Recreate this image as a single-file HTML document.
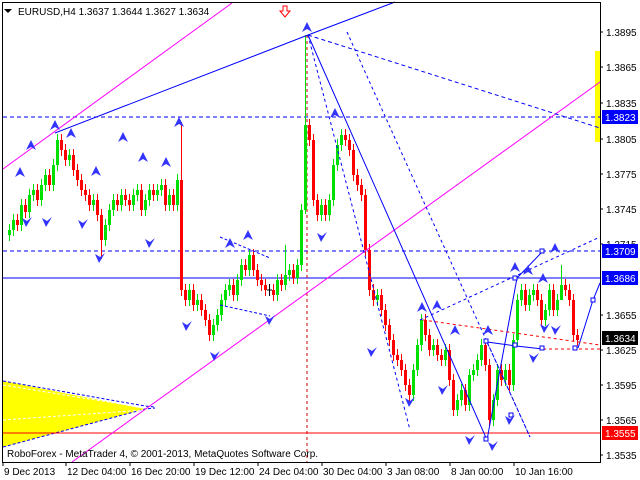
<!DOCTYPE html>
<html><head><meta charset="utf-8"><style>
html,body{margin:0;padding:0;background:#fff;}
svg{display:block;font-family:"Liberation Sans",sans-serif;}
</style></head><body>
<svg width="640" height="480" viewBox="0 0 640 480" xmlns="http://www.w3.org/2000/svg" xmlns:xlink="http://www.w3.org/1999/xlink">
<defs>
<path id="u" d="M-5 5L0-5L5 5L0 2Z" fill="#33f"/>
<path id="d" d="M-5-4L0-1L5-5L-1 5Z" fill="#33f"/>
</defs>
<rect width="640" height="480" fill="#fff"/>
<polygon points="3,381 3,447 145,409" fill="#ffff00"/>
<polyline points="3,381 145,406 155,407" fill="none" stroke="#00f" stroke-dasharray="3,2"/>
<polyline points="3,447 145,409 155,408" fill="none" stroke="#00f" stroke-dasharray="3,2"/>
<line x1="3" y1="385" x2="145" y2="408" stroke="#fff" stroke-dasharray="3,2"/>
<line x1="3" y1="420" x2="145" y2="410" stroke="#fff" stroke-dasharray="3,2"/>
<rect x="595" y="51" width="6" height="91" fill="#ffff00"/>

<g fill="none" stroke-width="1">
<line x1="3" y1="117" x2="600" y2="117" stroke="#00f" stroke-dasharray="4,3"/>
<line x1="3" y1="251" x2="600" y2="251" stroke="#00f" stroke-dasharray="4,3"/>
<line x1="3" y1="278" x2="600" y2="278" stroke="#00f"/>
<line x1="3" y1="433" x2="600" y2="433" stroke="#f00"/>
<line x1="307" y1="35" x2="307" y2="462" stroke="#c00" stroke-dasharray="3,3"/>
</g>

<!-- candles wicks -->
<path stroke="#00e000" fill="none" d="M9.5 224v17M13.5 214v22M21.5 199v32M29.5 189v29M33.5 184v17M41.5 179v27M45.5 169v22M53.5 159v32M57.5 134v37M69.5 149v17M93.5 194v17M105.5 219v27M109.5 204v27M113.5 194v22M121.5 189v22M133.5 189v22M137.5 184v17M145.5 194v22M149.5 184v22M157.5 184v17M161.5 179v17M169.5 189v22M177.5 174v37M189.5 284v22M197.5 294v17M213.5 319v22M217.5 309v22M221.5 294v27M225.5 284v22M229.5 279v17M237.5 274v27M241.5 259v27M249.5 249v27M277.5 274v27M285.5 245v45M289.5 264v17M297.5 259v25M301.5 204v67M305.5 35v179M321.5 199v22M329.5 194v27M333.5 159v47M337.5 139v32M341.5 129v22M377.5 289v17M413.5 364v37M417.5 339v37M421.5 314v37M433.5 339v17M445.5 344v22M457.5 394v22M461.5 384v22M469.5 369v42M473.5 364v17M477.5 354v22M481.5 339v27M493.5 394v32M497.5 364v42M505.5 364v22M513.5 334v57M517.5 294v52M521.5 284v22M529.5 289v22M533.5 284v17M545.5 304v22M549.5 284v32M557.5 294v22M561.5 265v35"/>
<path stroke="#f00" fill="none" d="M17.5 214v17M25.5 199v19M37.5 184v22M49.5 169v22M61.5 134v22M65.5 144v22M73.5 149v27M77.5 164v22M81.5 174v22M85.5 184v17M89.5 189v22M97.5 194v27M101.5 209v50M117.5 194v17M125.5 189v17M129.5 194v17M141.5 184v32M153.5 184v17M165.5 179v32M173.5 189v22M181.5 122v174M185.5 284v22M193.5 284v27M201.5 294v22M205.5 304v22M209.5 314v27M233.5 279v22M245.5 259v17M253.5 249v27M257.5 264v22M261.5 274v17M265.5 279v17M273.5 284v17M281.5 274v17M293.5 264v20M309.5 119v27M313.5 134v72M317.5 194v27M325.5 199v22M345.5 129v17M349.5 134v22M353.5 144v37M357.5 169v22M361.5 179v22M365.5 189v67M369.5 244v52M373.5 284v22M381.5 289v27M385.5 304v27M389.5 319v27M393.5 334v27M397.5 349v17M401.5 354v22M405.5 364v27M409.5 379v22M425.5 314v27M429.5 329v27M437.5 339v22M441.5 349v17M449.5 344v42M453.5 374v42M465.5 384v27M485.5 339v32M489.5 359v67M501.5 364v22M509.5 364v27M525.5 284v27M537.5 284v22M541.5 294v32M553.5 284v32M565.5 279v17M569.5 284v22M573.5 294v47M577.5 329v17"/>
<path stroke="#000" fill="none" d="M269.5 284v12M267 290h5"/>
<path fill="#00e000" d="M8 230h3v5h-3zM12 220h3v10h-3zM20 205h3v20h-3zM28 195h3v17h-3zM32 190h3v5h-3zM40 185h3v15h-3zM44 175h3v10h-3zM52 165h3v20h-3zM56 140h3v25h-3zM68 155h3v5h-3zM92 200h3v5h-3zM104 225h3v15h-3zM108 210h3v15h-3zM112 200h3v10h-3zM120 195h3v10h-3zM132 195h3v10h-3zM136 190h3v5h-3zM144 200h3v10h-3zM148 190h3v10h-3zM156 190h3v5h-3zM160 185h3v5h-3zM168 195h3v10h-3zM176 180h3v25h-3zM188 290h3v10h-3zM196 300h3v5h-3zM212 325h3v10h-3zM216 315h3v10h-3zM220 300h3v15h-3zM224 290h3v10h-3zM228 285h3v5h-3zM236 280h3v15h-3zM240 265h3v15h-3zM248 255h3v15h-3zM276 280h3v15h-3zM284 275h3v10h-3zM288 270h3v5h-3zM296 265h3v13h-3zM300 210h3v55h-3zM304 125h3v85h-3zM320 205h3v10h-3zM328 200h3v15h-3zM332 165h3v35h-3zM336 145h3v20h-3zM340 135h3v10h-3zM376 295h3v5h-3zM412 370h3v25h-3zM416 345h3v25h-3zM420 320h3v25h-3zM432 345h3v5h-3zM444 350h3v10h-3zM456 400h3v10h-3zM460 390h3v10h-3zM468 375h3v30h-3zM472 370h3v5h-3zM476 360h3v10h-3zM480 345h3v15h-3zM492 400h3v20h-3zM496 370h3v30h-3zM504 370h3v10h-3zM512 340h3v45h-3zM516 300h3v40h-3zM520 290h3v10h-3zM528 295h3v10h-3zM532 290h3v5h-3zM544 310h3v10h-3zM548 290h3v20h-3zM556 300h3v10h-3zM560 285h3v15h-3z"/>
<path fill="#f00" d="M16 220h3v5h-3zM24 205h3v7h-3zM36 190h3v10h-3zM48 175h3v10h-3zM60 140h3v10h-3zM64 150h3v10h-3zM72 155h3v15h-3zM76 170h3v10h-3zM80 180h3v10h-3zM84 190h3v5h-3zM88 195h3v10h-3zM96 200h3v15h-3zM100 215h3v25h-3zM116 200h3v5h-3zM124 195h3v5h-3zM128 200h3v5h-3zM140 190h3v20h-3zM152 190h3v5h-3zM164 185h3v20h-3zM172 195h3v10h-3zM180 180h3v110h-3zM184 290h3v10h-3zM192 290h3v15h-3zM200 300h3v10h-3zM204 310h3v10h-3zM208 320h3v15h-3zM232 285h3v10h-3zM244 265h3v5h-3zM252 255h3v15h-3zM256 270h3v10h-3zM260 280h3v5h-3zM264 285h3v5h-3zM272 290h3v5h-3zM280 280h3v5h-3zM292 270h3v8h-3zM308 125h3v15h-3zM312 140h3v60h-3zM316 200h3v15h-3zM324 205h3v10h-3zM344 135h3v5h-3zM348 140h3v10h-3zM352 150h3v25h-3zM356 175h3v10h-3zM360 185h3v10h-3zM364 195h3v55h-3zM368 250h3v40h-3zM372 290h3v10h-3zM380 295h3v15h-3zM384 310h3v15h-3zM388 325h3v15h-3zM392 340h3v15h-3zM396 355h3v5h-3zM400 360h3v10h-3zM404 370h3v15h-3zM408 385h3v10h-3zM424 320h3v15h-3zM428 335h3v15h-3zM436 345h3v10h-3zM440 355h3v5h-3zM448 350h3v30h-3zM452 380h3v30h-3zM464 390h3v15h-3zM484 345h3v20h-3zM488 365h3v55h-3zM500 370h3v10h-3zM508 370h3v15h-3zM524 290h3v15h-3zM536 290h3v10h-3zM540 300h3v20h-3zM552 290h3v20h-3zM564 285h3v5h-3zM568 290h3v10h-3zM572 300h3v35h-3zM576 335h3v5h-3z"/>

<g fill="none">
<line x1="3" y1="169" x2="232" y2="3" stroke="#f0f"/>
<line x1="72" y1="462" x2="600" y2="82" stroke="#f0f"/>
<polyline points="55,133 308,35 395,2" stroke="#00f"/>
<polyline points="308,35 487,440 517,278 543,251" stroke="#00f"/>
<polyline points="487,342 516,346 543,349" stroke="#00f"/>
<polyline points="578,348 593,300 600,283" stroke="#00f"/>
<line x1="308" y1="35" x2="600" y2="128" stroke="#00f" stroke-dasharray="4,3"/>
<line x1="347" y1="32" x2="530" y2="437" stroke="#00f" stroke-dasharray="3,3"/>
<line x1="308" y1="35" x2="410" y2="430" stroke="#00f" stroke-dasharray="3,3"/>
<line x1="420" y1="320" x2="600" y2="237" stroke="#00f" stroke-dasharray="3,3"/>
<line x1="487" y1="342" x2="530" y2="437" stroke="#00f" stroke-dasharray="3,3"/>
<line x1="423" y1="320" x2="600" y2="345" stroke="#f00" stroke-dasharray="3,3"/>
<line x1="543" y1="349" x2="600" y2="349" stroke="#f00" stroke-dasharray="3,3"/>
<polyline points="220,237 270,258" stroke="#00f" stroke-dasharray="3,2"/>
<polyline points="220,305 270,316" stroke="#00f" stroke-dasharray="3,2"/>
</g>
<g fill="#fff" stroke="#00f">
<rect x="484" y="339" width="4" height="4"/><rect x="513" y="343" width="4" height="4"/><rect x="540" y="346" width="4" height="4"/>
<rect x="484" y="437" width="4" height="4"/><rect x="509" y="413" width="4" height="4"/><rect x="513" y="276" width="4" height="4"/><rect x="540" y="249" width="4" height="4"/>
<rect x="573" y="346" width="4" height="4"/><rect x="591" y="298" width="4" height="4"/>
</g>
<g>
<use xlink:href="#u" x="20" y="172"/><use xlink:href="#u" x="31" y="145"/><use xlink:href="#u" x="55" y="125"/><use xlink:href="#u" x="71" y="133"/><use xlink:href="#u" x="96" y="171"/><use xlink:href="#u" x="123" y="137"/><use xlink:href="#u" x="143" y="157"/><use xlink:href="#u" x="166" y="162"/><use xlink:href="#u" x="179" y="122"/><use xlink:href="#u" x="230" y="243"/><use xlink:href="#u" x="248" y="235"/><use xlink:href="#u" x="307" y="27"/><use xlink:href="#u" x="335" y="113"/><use xlink:href="#u" x="422" y="307"/><use xlink:href="#u" x="437" y="305"/><use xlink:href="#u" x="455" y="330"/><use xlink:href="#u" x="488" y="330"/><use xlink:href="#u" x="515" y="267"/><use xlink:href="#u" x="528" y="270"/><use xlink:href="#u" x="543" y="278"/><use xlink:href="#u" x="555" y="248"/>
<use xlink:href="#d" x="27" y="222"/><use xlink:href="#d" x="47" y="222"/><use xlink:href="#d" x="83" y="224"/><use xlink:href="#d" x="100" y="258"/><use xlink:href="#d" x="150" y="243"/><use xlink:href="#d" x="187" y="326"/><use xlink:href="#d" x="215" y="356"/><use xlink:href="#d" x="270" y="320"/><use xlink:href="#d" x="322" y="237"/><use xlink:href="#d" x="372" y="352"/><use xlink:href="#d" x="410" y="402"/><use xlink:href="#d" x="443" y="390"/><use xlink:href="#d" x="470" y="440"/><use xlink:href="#d" x="493" y="446"/><use xlink:href="#d" x="510" y="420"/><use xlink:href="#d" x="545" y="328"/><use xlink:href="#d" x="556" y="330"/><use xlink:href="#d" x="534" y="358"/>
</g>
<rect x="2.5" y="2.5" width="598" height="460" fill="none" stroke="#000"/>
<g font-size="10" fill="#000">
<path d="M4 9 L12 9 L8 13Z" fill="#000"/>
<text x="18" y="15">EURUSD,H4  1.3637 1.3644 1.3627 1.3634</text>
<text x="7" y="457">RoboForex - MetaTrader 4, © 2001-2013, MetaQuotes Software Corp.</text>
</g>
<path d="M283 6h4v5h3l-5 6-5-6h3z" fill="#fff" stroke="#f00"/>
<g font-size="10" fill="#000">
<path stroke="#000" d="M600 32h3M600 67h3M600 103h3M600 139h3M600 174h3M600 209h3M600 244h3M600 315h3M600 350h3M600 385h3M600 420h3M600 455h3M3 462v4M66 462v4M130 462v4M194 462v4M258 462v4M322 462v4M386 462v4M450 462v4M514 462v4"/>
<text x="606" y="36">1.3895</text><text x="606" y="71">1.3865</text><text x="606" y="107">1.3835</text><text x="606" y="143">1.3805</text><text x="606" y="178">1.3775</text><text x="606" y="213">1.3745</text><text x="606" y="248">1.3715</text><text x="606" y="319">1.3655</text><text x="606" y="354">1.3625</text><text x="606" y="389">1.3595</text><text x="606" y="424">1.3565</text><text x="606" y="459">1.3535</text>
<text x="4" y="475">9 Dec 2013</text><text x="67" y="475">12 Dec 04:00</text><text x="131" y="475">16 Dec 20:00</text><text x="195" y="475">19 Dec 12:00</text><text x="259" y="475">24 Dec 04:00</text><text x="323" y="475">30 Dec 04:00</text><text x="387" y="475">3 Jan 08:00</text><text x="451" y="475">8 Jan 00:00</text><text x="515" y="475">10 Jan 16:00</text>
</g>
<g font-size="10">
<rect x="602" y="110" width="36" height="14" fill="#00f"/><text x="605" y="121" fill="#fff">1.3823</text>
<rect x="602" y="244" width="36" height="14" fill="#00f"/><text x="605" y="255" fill="#fff">1.3709</text>
<rect x="602" y="271" width="36" height="14" fill="#00f"/><text x="605" y="282" fill="#fff">1.3686</text>
<rect x="602" y="331" width="36" height="14" fill="#000"/><text x="605" y="342" fill="#fff">1.3634</text>
<rect x="602" y="426" width="36" height="14" fill="#f00"/><text x="605" y="437" fill="#fff">1.3555</text>
</g>
</svg>
</body></html>
